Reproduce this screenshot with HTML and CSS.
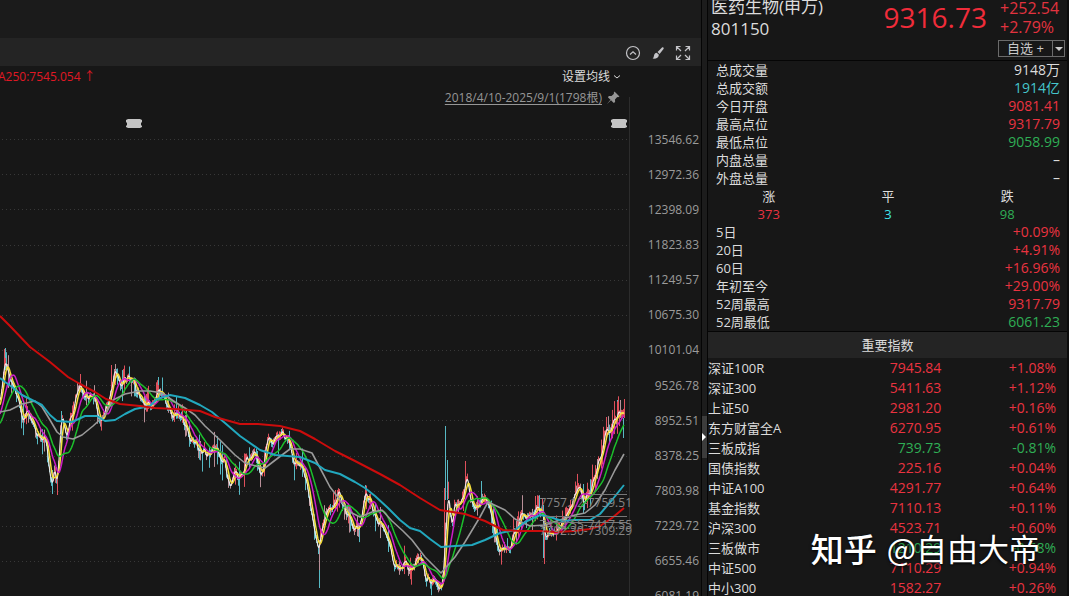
FILE: index.html
```html
<!DOCTYPE html>
<html lang="zh-CN">
<head>
<meta charset="utf-8">
<title>医药生物(申万) 801150</title>
<link rel="stylesheet" href="styles.css">
</head>
<body>
<div class="app">
  <main class="chart-panel">
    <div class="top-strip"></div>
    <div class="toolbar">
      <button class="icon-btn" type="button" aria-label="收起"><svg width="16" height="16" viewBox="0 0 16 16"><circle cx="8" cy="8" r="6.5"/><path d="M5 9.500 8 6.700l3 2.800"/></svg></button>
      <button class="icon-btn" type="button" aria-label="画笔"><svg width="16" height="16" viewBox="0 0 16 16"><path class="solid" d="M12 2.600c1-.9 2.300.2 1.500 1.300L9.600 9 7.500 7.100zM6.700 7.800l2.200 2C8.700 12.900 6 14 2.600 13.600c1.400-.9 1-2.200 1.600-3.800.5-1.200 1.400-1.900 2.500-2z"/></svg></button>
      <button class="icon-btn" type="button" aria-label="全屏"><svg width="16" height="16" viewBox="0 0 16 16"><path d="M1.500 5.500v-4h4M10.500 1.500h4v4M14.500 10.500v4h-4M5.500 14.500h-4v-4M2 2l4 4M14 2l-4 4M14 14l-4-4M2 14l4-4"/></svg></button>
    </div>
    <div class="legend-row">
      <span class="ma-label">A250:7545.054 ↑</span>
      <button class="ma-settings" type="button">设置均线<svg width="8" height="6" viewBox="0 0 8 6"><path d="M1 1.500 4 4l3-2.500"/></svg></button>
    </div>
    <div class="range-row">
      <a class="range" href="#">2018/4/10-2025/9/1(1798根)</a>
      <svg class="pin" width="14" height="14" viewBox="0 0 14 14"><path d="M8.500.5 13.500 5.500l-1.500.8-.8-.2-2.200 2.400.1 2.600-1.300 1L5 9.300.8 13.200 4.500 8.700 1.900 6.200l1-1.300 2.600.1 2.500-2.200-.3-.9z"/></svg>
    </div>
    <div class="chart-body">
      <div class="plot">
        <svg id="chart" class="chart" viewBox="0 108 640 488" preserveAspectRatio="none" role="img" aria-label="K线图"></svg>
        <div class="marks"><span class="note mid">7757.12-7759.51</span><span class="note low">7412.55-7417.55</span><span class="note base">7292.30-7309.29</span></div>
      </div>
      <div class="axis">
        <span>13546.62</span><span>12972.36</span><span>12398.09</span><span>11823.83</span><span>11249.57</span><span>10675.30</span><span>10101.04</span><span>9526.78</span><span>8952.51</span><span>8378.25</span><span>7803.98</span><span>7229.72</span><span>6655.46</span><span>6081.19</span>
      </div>
    </div>
  </main>
  <div class="splitter"><button class="grip" type="button" aria-label="展开侧栏"></button></div>
  <aside class="quote">
    <header class="head">
      <div class="title"><div>医药生物(申万)</div><div>801150</div></div>
      <div class="price">9316.73</div>
      <div class="change"><div>+252.54</div><div>+2.79%</div>
        <div class="fav"><button type="button">自选 +</button><button class="more" type="button" aria-label="更多"></button></div>
      </div>
    </header>
    <section class="stats">
      <table class="kv">
        <tr><th>总成交量</th><td>9148万</td></tr>
        <tr><th>总成交额</th><td class="cyan">1914亿</td></tr>
        <tr><th>今日开盘</th><td class="up">9081.41</td></tr>
        <tr><th>最高点位</th><td class="up">9317.79</td></tr>
        <tr><th>最低点位</th><td class="down">9058.99</td></tr>
        <tr><th>内盘总量</th><td>–</td></tr>
        <tr><th>外盘总量</th><td>–</td></tr>
      </table>
      <table class="breadth">
        <tr><th>涨</th><th>平</th><th>跌</th></tr>
        <tr><td class="up">373</td><td class="flat">3</td><td class="down">98</td></tr>
      </table>
      <table class="kv">
        <tr><th>5日</th><td class="up">+0.09%</td></tr>
        <tr><th>20日</th><td class="up">+4.91%</td></tr>
        <tr><th>60日</th><td class="up">+16.96%</td></tr>
        <tr><th>年初至今</th><td class="up">+29.00%</td></tr>
        <tr><th>52周最高</th><td class="up">9317.79</td></tr>
        <tr><th>52周最低</th><td class="down">6061.23</td></tr>
      </table>
    </section>
    <h2 class="section-title">重要指数</h2>
    <table class="indices">
      <tr class="up"><th>深证100R</th><td>7945.84</td><td>+1.08%</td></tr>
      <tr class="up"><th>深证300</th><td>5411.63</td><td>+1.12%</td></tr>
      <tr class="up"><th>上证50</th><td>2981.20</td><td>+0.16%</td></tr>
      <tr class="up"><th>东方财富全A</th><td>6270.95</td><td>+0.61%</td></tr>
      <tr class="down"><th>三板成指</th><td>739.73</td><td>-0.81%</td></tr>
      <tr class="up"><th>国债指数</th><td>225.16</td><td>+0.04%</td></tr>
      <tr class="up"><th>中证A100</th><td>4291.77</td><td>+0.64%</td></tr>
      <tr class="up"><th>基金指数</th><td>7110.13</td><td>+0.11%</td></tr>
      <tr class="up"><th>沪深300</th><td>4523.71</td><td>+0.60%</td></tr>
      <tr class="down"><th>三板做市</th><td>1210.29</td><td>-0.58%</td></tr>
      <tr class="up"><th>中证500</th><td>7110.29</td><td>+0.94%</td></tr>
      <tr class="up"><th>中小300</th><td>1582.27</td><td>+0.26%</td></tr>
    </table>
  </aside>
  <div class="watermark"><b>知乎</b><span>@自由大帝</span></div>
</div>
<script src="chart.js"></script>
</body>
</html>
```

FILE: styles.css
```css
* { box-sizing: border-box; }
body {
  margin: 0;
  background: #171717;
  color: #dcdcdc;
  font: 13px/18px "Open Sans", "Noto Sans CJK SC", sans-serif;
}
button { font: inherit; color: inherit; background: none; border: 0; padding: 0; margin: 0; }
table { border-collapse: collapse; width: 100%; table-layout: fixed; }
th, td { padding: 0; font-weight: 400; }
.app { position: relative; display: flex; height: 100vh; overflow: hidden; }

.chart-panel { flex: 1; min-width: 0; display: flex; flex-direction: column; }
.top-strip { height: 38px; flex: none; background: #1b1b1b; }
.toolbar {
  height: 28px; flex: none; background: #242424;
  display: flex; justify-content: flex-end; align-items: center; gap: 9px;
  padding: 2px 10px 0 0;
}
.icon-btn { width: 16px; height: 16px; }
.icon-btn svg { display: block; fill: none; stroke: #c4c4c8; stroke-width: 1.2; }
.icon-btn .solid { fill: #c4c4c8; stroke: none; }
.legend-row {
  height: 21px; flex: none; font-size: 12px; line-height: 21px;
  display: flex; justify-content: space-between; padding-right: 80px;
}
.ma-label { color: #e01824; margin-left: -2px; }
.ma-settings { display: flex; align-items: center; gap: 3px; }
.ma-settings svg { fill: none; stroke: #dcdcdc; }
.range-row {
  height: 21px; flex: none; font-size: 12px; line-height: 21px;
  display: flex; justify-content: flex-end; align-items: center; gap: 4px; padding-right: 81px;
}
.range { color: #969696; text-decoration: underline; text-underline-offset: 2px; }
.pin { fill: #969696; }
.chart-body { flex: 1; min-height: 0; display: flex; }
.plot { flex: 1; min-width: 0; position: relative; }
.chart { display: block; width: 100%; height: 100%; overflow: visible; }
.grid { stroke: #383838; stroke-dasharray: 1 3; }
.frame { stroke: #2c2c2c; }
.guide { stroke: #777; }
.badge { fill: #c4c4c4; }
.bars { fill: none; stroke-width: 1; }
.bars.rise { stroke: #e0505c; }
.bars.fall { stroke: #57b9c4; }
.bars.wick { stroke: #b98f98; }
.line { fill: none; stroke-width: 1.5; stroke-linejoin: round; }
.ma5 { stroke: #efe9e6; stroke-width: 1.2; }
.ma10 { stroke: #f6e03c; }
.ma20 { stroke: #cc1cc6; }
.ma30 { stroke: #1cc02c; }
.ma60 { stroke: #9a9a9a; stroke-width: 1.6; }
.ma120 { stroke: #22a8be; stroke-width: 2; }
.ma250 { stroke: #cc0c0c; stroke-width: 2; }
.note { position: absolute; right: 8px; color: #858585; font-size: 12px; line-height: 16px; }
.mid { top: 387px; }
.low { top: 409px; }
.base { top: 415px; }
.axis {
  width: 61px; margin: 14px 0 -18px; padding-right: 2px; flex: none;
  display: grid; grid-template-rows: repeat(14, 1fr); align-items: center; justify-items: end;
  color: #9b9b9b; font-size: 12px; line-height: 16px;
}

.splitter {
  width: 7px; flex: none; background: #1c1c1c;
  border: solid #050505; border-width: 0 1px;
  display: flex; flex-direction: column; justify-content: center; padding-top: 278px;
}
.grip { height: 42px; background: #3c3c3c; position: relative; }
.grip::after {
  content: ""; position: absolute; left: 0; top: 17px;
  border: solid transparent; border-width: 4px 0 4px 4px; border-left-color: #fff;
}

.quote { width: 361px; flex: none; border-right: 2px solid #0c0c0c; overflow: hidden; }
.head { height: 61px; display: flex; border-bottom: 1px solid #050505; overflow: hidden; }
.title { flex: 1; padding-left: 3px; font-size: 17px; line-height: 22px; margin-top: -4px; }
.price { color: #f02c3a; font-size: 28px; line-height: 34px; padding-right: 13px; }
.change { width: 67px; color: #e2333f; font-size: 16px; line-height: 19px; margin-top: -1px; }
.fav {
  display: flex; width: 67px; height: 17px; margin: 3px 0 0 -2px;
  border: 1px solid #6b6b6b; color: #c8c8c8; font-size: 13px; line-height: 15px;
}
.fav button { flex: 1; line-height: 15px; }
.fav .more { flex: 0 0 12px; border-left: 1px solid #6b6b6b; display: grid; place-items: center; }
.more::after { content: ""; border: solid transparent; border-width: 4px 4px 0; border-top-color: #ccc; }

.stats { padding: 0 7px 0 8px; border-bottom: 1px solid #050505; }
.stats tr { height: 18px; }
.kv th { text-align: left; }
.kv td { text-align: right; font-size: 14px; line-height: 18px; }
.breadth { width: 104%; margin-left: -2%; }
.breadth th, .breadth td { text-align: center; }
.up { color: #ea3340; }
.down { color: #2fae55; }
.cyan { color: #45c6cc; }
.flat { color: #3fe4ec; }
.section-title {
  margin: 0; height: 26px; background: #242424;
  font-size: 13px; font-weight: 400; line-height: 26px; text-align: center;
}
.indices tr { height: 20px; }
.indices th { color: #dcdcdc; text-align: left; width: 33%; }
.indices td { text-align: right; font-size: 14px; line-height: 20px; }
.indices td:last-child { padding-right: 11px; width: 35%; }

.watermark {
  position: absolute; right: 29px; bottom: 26px; display: flex; gap: 10px; align-items: center;
  color: #fff; font: 31px/44px "Noto Sans CJK SC", sans-serif; text-shadow: 0 1px 3px #000;
}
.watermark b { font-size: 33px; font-weight: 500; }
```

FILE: chart.js
```js
const price = [[-30,440],[-12,430],[-4,410],[0,395],[2,380],[5,364],[8,368],[10,378],[13,385],[18,395],[20,410],[22,422],[24,415],[27,413],[30,420],[33,425],[36,432],[40,435],[43,438],[46,445],[48,462],[50,478],[52,485],[54,472],[57,478],[59,455],[60,430],[62,418],[64,425],[66,432],[68,430],[70,420],[73,415],[75,400],[78,390],[80,386],[82,392],[85,398],[88,396],[92,392],[95,398],[98,418],[101,420],[104,410],[107,405],[109,400],[112,385],[114,372],[117,377],[120,383],[124,380],[127,378],[130,381],[134,385],[137,392],[140,398],[143,405],[147,405],[150,403],[153,400],[156,392],[158,385],[160,390],[163,398],[166,408],[170,415],[173,418],[176,412],[179,415],[182,418],[185,425],[188,435],[192,442],[196,446],[200,448],[204,452],[208,455],[213,446],[217,452],[220,462],[224,462],[227,475],[230,485],[233,478],[236,475],[240,478],[243,470],[246,460],[250,455],[254,446],[257,460],[260,478],[263,465],[265,450],[268,440],[272,441],[276,437],[280,433],[282,432],[285,438],[288,442],[291,450],[294,460],[297,460],[300,462],[304,475],[307,488],[310,505],[313,520],[316,540],[318,553],[320,540],[322,530],[325,515],[328,508],[331,508],[334,505],[337,497],[339,495],[342,505],[346,513],[350,520],[354,531],[358,528],[361,515],[363,500],[365,490],[368,496],[371,505],[375,515],[380,525],[384,535],[388,545],[392,558],[396,568],[399,573],[403,565],[406,562],[410,570],[413,565],[417,558],[420,562],[423,565],[426,578],[430,580],[434,582],[438,588],[441,592],[443,575],[445,535],[447,505],[448,495],[450,515],[452,520],[454,508],[457,506],[460,508],[463,500],[465,485],[467,482],[469,492],[472,500],[475,508],[478,503],[482,495],[485,497],[488,505],[490,512],[493,525],[496,540],[499,550],[502,547],[506,545],[510,545],[513,535],[517,524],[520,516],[523,518],[527,514],[532,512],[536,510],[540,510],[543,516],[544,528],[546,535],[549,530],[553,535],[557,527],[562,522],[566,515],[570,510],[574,498],[576,488],[578,484],[581,492],[584,502],[587,497],[591,490],[595,478],[598,465],[601,452],[604,440],[607,428],[611,430],[614,422],[617,418],[620,411],[624,412]];
const slow = {
  ma60: "0,412 10,410 22,404 35,401 42,407 50,420 57,432 63,437 73,439 82,435 93,426 105,415 113,400 125,394 140,391 150,391 162,393 175,402 185,408 195,415 205,426 220,440 235,455 245,463 256,466 265,468 278,458 290,449 300,449 312,453 320,468 330,487 340,500 350,512 360,517 372,512 382,510 392,521 403,531 412,540 425,557 441,573 455,557 465,542 480,517 488,502 505,510 515,519 530,526 545,525 560,520 575,515 585,513 595,505 605,490 615,470 624,454",
  ma120: "0,378 5,382 12,387 22,395 32,400 42,405 50,415 57,421 72,422 85,416 97,416 105,421 115,420 125,414 135,409 150,406 157,399 170,395 185,398 200,405 212,412 225,423 240,436 260,450 275,455 300,457 315,463 325,470 340,474 355,482 365,488 375,496 388,508 400,520 410,528 420,531 430,539 441,547 455,546 472,545 485,540 500,533 515,530 525,522 540,515 550,517 562,521 575,520 590,520 600,514 612,500 624,485",
  ma250: "0,316 10,326 30,347 50,362 68,377 80,384 95,392 106,399 120,404 140,406 155,408 175,409 200,411 215,417 240,424 258,424 280,426 300,431 315,439 335,451 355,461 380,474 400,485 420,498 440,510 465,514 485,521 503,530 520,531 540,531 555,532 575,531 590,529 600,526 612,518 624,508"
};
const spikes = [["fall",5,348,370],["fall",52,470,494],["rise",57,470,495],["fall",61,411,450],["rise",111,365,400],["wick",115,364,385],["fall",158,377,395],["wick",319,540,570],["fall",319,570,588],["fall",365,485,500],["fall",445,426,500],["fall",447,460,500],["rise",444,488,570],["rise",465,461,490],["fall",481,481,500],["fall",543,505,558],["rise",544,515,564],["rise",542,498,515],["rise",606,417,440],["fall",617,400,425],["wick",620,400,418],["rise",624,399,418],["fall",623,418,438]];

let seed = 7;
const rand = () => (seed = (seed * 16807) % 2147483647) / 2147483647;
const zigzag = Array.from({ length: 340 }, () => (rand() - 0.5) * 10);
const base = x => {
  let i = 1;
  while (i < price.length - 1 && price[i][0] < x) i++;
  const [a, b] = [price[i - 1], price[i]];
  return a[1] + (b[1] - a[1]) * (x - a[0]) / (b[0] - a[0]);
};
const at = x => {
  const t = (x + 40) / 2, i = Math.floor(t);
  return Math.min(594, base(x) + zigzag[i] + (zigzag[i + 1] - zigzag[i]) * (t - i));
};
const step = 0.5;
const close = [];
for (let x = -30; x <= 624; x += step) close.push([x, at(x)]);
const average = span => {
  const n = span / step;
  return close.map(([x], i) => {
    const part = close.slice(Math.max(0, i - n + 1), i + 1);
    return [x, part.reduce((s, p) => s + p[1], 0) / part.length];
  }).filter(p => p[0] >= 0).map(p => p[0] + "," + p[1].toFixed(1)).join(" ");
};
const paths = { rise: "", fall: "", wick: "" };
for (let x = 0; x < 624; x++) {
  const y = at(x), slope = at(x) - at(x - 2), r = rand();
  const kind = r < 0.25 ? "wick" : (slope + (rand() - 0.5) * 8 < 0 ? "rise" : "fall");
  const big = rand() < 0.3 ? 13 : 0;
  paths[kind] += `M${x + 0.5} ${(y - 1 - rand() * (4 + big)).toFixed(1)}V${(y + 1 + rand() * (4 + big)).toFixed(1)}`;
}
for (const [kind, x, top, bottom] of spikes) paths[kind] += `M${x + 0.5} ${top}V${bottom}`;

let out = "";
for (let i = 0; i < 13; i++) {
  const y = Math.round(139 + i * 35.17) + 0.5;
  out += `<path class="grid" d="M2 ${y}H629"/>`;
}
out += '<path class="frame" d="M629.5 97V596"/>';
for (const kind of ["wick", "fall", "rise"]) out += `<path class="bars ${kind}" d="${paths[kind]}"/>`;
for (const [name, span] of [["ma5", 2], ["ma10", 5], ["ma20", 12], ["ma30", 23]]) {
  out += `<polyline class="line ${name}" points="${average(span)}"/>`;
}
for (const name in slow) out += `<polyline class="line ${name}" points="${slow[name]}"/>`;
out += '<path class="guide" d="M590 494.500H627M545 516.500H627M545 522.500H627"/>';
for (const x of [134, 619]) {
  out += `<path class="badge" d="M${x - 6} 119h12l2 1v2l-1 1v2l1 1v1l-2 1h-12l-2-1v-1l1-1v-2l-1-1v-2z"/>`;
}
document.getElementById("chart").innerHTML = out;
```
